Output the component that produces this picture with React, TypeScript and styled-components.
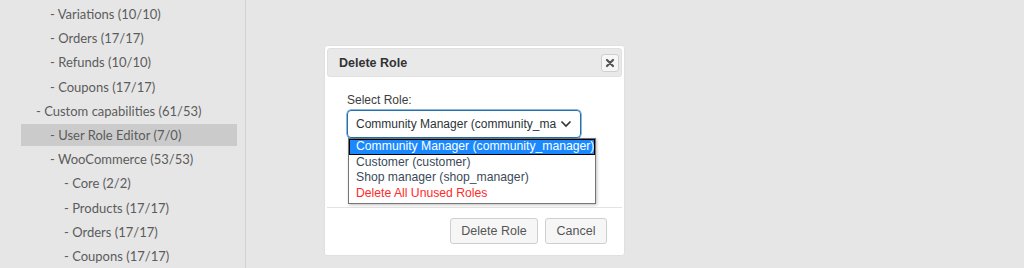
import React from "react";
import styled, { createGlobalStyle } from "styled-components";

const Global = createGlobalStyle`
  html, body { margin: 0; padding: 0; background: #e6e6e6; }
  body { width: 1024px; height: 268px; overflow: hidden; }
`;

const Page = styled.div`
  display: flex;
  width: 1024px;
  height: 268px;
  overflow: hidden;
  background: #e6e6e6;
`;

const Sidebar = styled.div`
  width: 246px;
  flex: none;
  border-right: 1px solid #d2d2d2;
  padding: 3px 0 0 21px;
  box-sizing: border-box;
  display: flex;
  flex-direction: column;
  gap: 2.2px;
`;

const TreeRow = styled.div<{ $level: number; $active?: boolean }>`
  width: 216px;
  height: 22px;
  flex: none;
  display: flex;
  align-items: center;
  padding-left: ${(p) => 1 + p.$level * 14}px;
  box-sizing: border-box;
  background: ${(p) => (p.$active ? "#cbcbcb" : "transparent")};
  font-family: Lato, "Open Sans", sans-serif;
  font-size: 13px;
  color: #5c5c5c;
  white-space: nowrap;
`;

const Main = styled.div`
  flex: 1;
  padding: 45px 0 0 78px;
`;

const Dialog = styled.div`
  width: 301px;
  height: 211px;
  background: #fff;
  border: 1px solid #e0e0e0;
  border-radius: 3px;
  padding: 2px;
  box-sizing: border-box;
  display: flex;
  flex-direction: column;
  font-family: "Liberation Sans", Arial, sans-serif;
`;

const TitleBar = styled.div`
  height: 29px;
  flex: none;
  background: #e9e9e9;
  border: 1px solid #e0e0e0;
  border-radius: 3px;
  box-sizing: border-box;
  display: flex;
  align-items: center;
  justify-content: space-between;
  padding: 0 2px 0 11px;
`;

const Title = styled.span`
  font-weight: bold;
  font-size: 12.5px;
  color: #333;
`;

const CloseButton = styled.div`
  width: 18px;
  height: 18px;
  box-sizing: border-box;
  border: 1px solid #cfcfcf;
  border-radius: 3px;
  background: #f6f6f6;
  display: flex;
  align-items: center;
  justify-content: center;
`;

const Body = styled.div`
  flex: 1;
  padding: 16px 20px 0 20px;
`;

const Label = styled.div`
  font-size: 12px;
  color: #3c3c3c;
  margin-bottom: 3px;
`;

const SelectWrap = styled.div`
  position: relative;
  width: 234px;
`;

const SelectBox = styled.div`
  height: 28px;
  box-sizing: border-box;
  border: 1px solid #2271b1;
  box-shadow: 0 0 0 0.5px #2271b1;
  border-radius: 4px;
  display: flex;
  align-items: center;
  gap: 6px;
  padding: 0 8px 0 8px;
  font-size: 12px;
  color: #2c3338;
  white-space: nowrap;
`;

const SelectText = styled.span`
  flex: 1;
  min-width: 0;
`;

const DropList = styled.div`
  position: absolute;
  left: 1px;
  top: 28px;
  width: 248px;
  background: #fff;
  border: 1px solid #767676;
  box-shadow: 1px 1px 3px rgba(0, 0, 0, 0.25);
  box-sizing: border-box;
  padding-bottom: 2px;
`;

const Option = styled.div<{ $selected?: boolean; $danger?: boolean }>`
  height: 15.5px;
  line-height: 15.5px;
  padding-left: 7px;
  font-size: 12.2px;
  white-space: nowrap;
  background: ${(p) => (p.$selected ? "#1a88ff" : "transparent")};
  color: ${(p) => (p.$selected ? "#fff" : p.$danger ? "#ff2a2a" : "#3b4a5a")};
  outline: ${(p) => (p.$selected ? "1px solid #000" : "none")};
  outline-offset: -1px;
`;

const Footer = styled.div`
  border-top: 1px solid #e3e3e3;
  height: 46px;
  flex: none;
  display: flex;
  justify-content: flex-end;
  align-items: flex-start;
  padding: 10px 15px 0 0;
  gap: 7px;
  box-sizing: border-box;
`;

const Button = styled.div<{ $w: number }>`
  width: ${(p) => p.$w}px;
  height: 26px;
  box-sizing: border-box;
  border: 1px solid #cfcfcf;
  border-radius: 3px;
  background: #f6f6f6;
  display: flex;
  align-items: center;
  justify-content: center;
  font-size: 12.5px;
  color: #555;
`;

const rows: { t: string; l: number; a?: boolean }[] = [
  { t: "- Variations (10/10)", l: 2 },
  { t: "- Orders (17/17)", l: 2 },
  { t: "- Refunds (10/10)", l: 2 },
  { t: "- Coupons (17/17)", l: 2 },
  { t: "- Custom capabilities (61/53)", l: 1 },
  { t: "- User Role Editor (7/0)", l: 2, a: true },
  { t: "- WooCommerce (53/53)", l: 2 },
  { t: "- Core (2/2)", l: 3 },
  { t: "- Products (17/17)", l: 3 },
  { t: "- Orders (17/17)", l: 3 },
  { t: "- Coupons (17/17)", l: 3 },
];

export default function App() {
  return (
    <Page>
      <Global />
      <Sidebar>
        {rows.map((r, i) => (
          <TreeRow key={i} $level={r.l} $active={r.a}>
            {r.t}
          </TreeRow>
        ))}
      </Sidebar>
      <Main>
        <Dialog>
          <TitleBar>
            <Title>Delete Role</Title>
            <CloseButton>
              <svg width="10" height="10" viewBox="0 0 10 10">
                <path d="M2 2 L8 8 M8 2 L2 8" stroke="#555" strokeWidth="2.2" strokeLinecap="round" />
              </svg>
            </CloseButton>
          </TitleBar>
          <Body>
            <Label>Select Role:</Label>
            <SelectWrap>
              <SelectBox>
                <SelectText>Community Manager (community_ma</SelectText>
                <svg width="12" height="8" viewBox="0 0 12 8">
                  <path d="M1.5 1.5 L6 6 L10.5 1.5" stroke="#2c3338" strokeWidth="1.6" fill="none" />
                </svg>
              </SelectBox>
              <DropList>
                <Option $selected>Community Manager (community_manager)</Option>
                <Option>Customer (customer)</Option>
                <Option>Shop manager (shop_manager)</Option>
                <Option $danger>Delete All Unused Roles</Option>
              </DropList>
            </SelectWrap>
          </Body>
          <Footer>
            <Button $w={88}>Delete Role</Button>
            <Button $w={62}>Cancel</Button>
          </Footer>
        </Dialog>
      </Main>
    </Page>
  );
}
